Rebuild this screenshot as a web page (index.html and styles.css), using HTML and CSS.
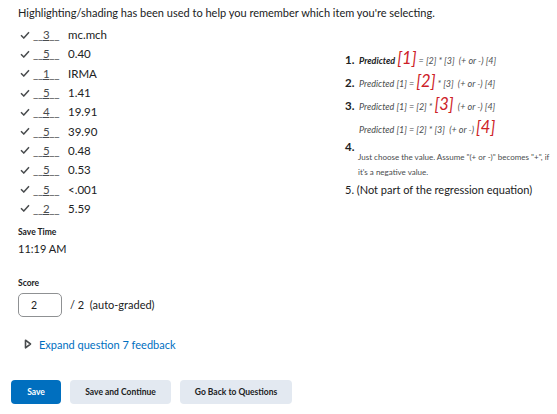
FILE: index.html
```html
<!DOCTYPE html>
<html lang="en">
<head>
  <meta charset="UTF-8">
  <title>Question 7</title>
  <link rel="stylesheet" href="styles.css">
</head>
<body>
  <p class="intro">Highlighting/shading has been used to help you remember which item you're selecting.</p>

  <div class="match">
    <ul class="answers">
      <li><svg class="check" width="10" height="8" viewBox="0 0 10 8"><path d="M1 4.2 L3.8 7 L9 1.2" fill="none" stroke="#494c4e" stroke-width="1.5"/></svg><span class="blank">__<u>3</u>__</span><span>mc.mch</span></li>
      <li><svg class="check" width="10" height="8" viewBox="0 0 10 8"><path d="M1 4.2 L3.8 7 L9 1.2" fill="none" stroke="#494c4e" stroke-width="1.5"/></svg><span class="blank">__<u>5</u>__</span><span>0.40</span></li>
      <li><svg class="check" width="10" height="8" viewBox="0 0 10 8"><path d="M1 4.2 L3.8 7 L9 1.2" fill="none" stroke="#494c4e" stroke-width="1.5"/></svg><span class="blank">__<u>1</u>__</span><span>IRMA</span></li>
      <li><svg class="check" width="10" height="8" viewBox="0 0 10 8"><path d="M1 4.2 L3.8 7 L9 1.2" fill="none" stroke="#494c4e" stroke-width="1.5"/></svg><span class="blank">__<u>5</u>__</span><span>1.41</span></li>
      <li><svg class="check" width="10" height="8" viewBox="0 0 10 8"><path d="M1 4.2 L3.8 7 L9 1.2" fill="none" stroke="#494c4e" stroke-width="1.5"/></svg><span class="blank">__<u>4</u>__</span><span>19.91</span></li>
      <li><svg class="check" width="10" height="8" viewBox="0 0 10 8"><path d="M1 4.2 L3.8 7 L9 1.2" fill="none" stroke="#494c4e" stroke-width="1.5"/></svg><span class="blank">__<u>5</u>__</span><span>39.90</span></li>
      <li><svg class="check" width="10" height="8" viewBox="0 0 10 8"><path d="M1 4.2 L3.8 7 L9 1.2" fill="none" stroke="#494c4e" stroke-width="1.5"/></svg><span class="blank">__<u>5</u>__</span><span>0.48</span></li>
      <li><svg class="check" width="10" height="8" viewBox="0 0 10 8"><path d="M1 4.2 L3.8 7 L9 1.2" fill="none" stroke="#494c4e" stroke-width="1.5"/></svg><span class="blank">__<u>5</u>__</span><span>0.53</span></li>
      <li><svg class="check" width="10" height="8" viewBox="0 0 10 8"><path d="M1 4.2 L3.8 7 L9 1.2" fill="none" stroke="#494c4e" stroke-width="1.5"/></svg><span class="blank">__<u>5</u>__</span><span>&lt;.001</span></li>
      <li><svg class="check" width="10" height="8" viewBox="0 0 10 8"><path d="M1 4.2 L3.8 7 L9 1.2" fill="none" stroke="#494c4e" stroke-width="1.5"/></svg><span class="blank">__<u>2</u>__</span><span>5.59</span></li>
    </ul>

    <ol class="choices">
      <li><span class="num">1.</span><span class="eq"><b>Predicted</b> <span class="hl">[1]</span> = [2] * [3] &nbsp;(+ or -) [4]</span></li>
      <li><span class="num">2.</span><span class="eq">Predicted [1] = <span class="hl">[2]</span> * [3] &nbsp;(+ or -) [4]</span></li>
      <li><span class="num">3.</span><span class="eq">Predicted [1] = [2] * <span class="hl">[3]</span> &nbsp;(+ or -) [4]</span></li>
      <li class="sub"><span class="eq">Predicted [1] = [2] * [3] &nbsp;(+ or -) <span class="hl">[4]</span></span></li>
      <li class="four"><span class="num">4.</span><span class="note">Just choose the value. Assume "(+ or -)" becomes "+", if it's a negative value.</span></li>
      <li class="five">5. (Not part of the regression equation)</li>
    </ol>
  </div>

  <div class="field">
    <div class="label">Save Time</div>
    <div class="time">11:19 AM</div>
  </div>

  <div class="field score-field">
    <div class="label">Score</div>
    <div class="score">
      <span class="box">2</span>
      <span>/ 2 &nbsp;(auto-graded)</span>
    </div>
  </div>

  <div class="expand">
    <svg width="8" height="10" viewBox="0 0 8 10"><path d="M1.5 1.2 L6.5 5 L1.5 8.8 Z" fill="none" stroke="#494c4e" stroke-width="1.6" stroke-linejoin="round"/></svg>
    <a href="#">Expand question 7 feedback</a>
  </div>

  <div class="actions">
    <button class="primary">Save</button>
    <button class="wide">Save and Continue</button>
    <button class="wider">Go Back to Questions</button>
  </div>
</body>
</html>
```

FILE: styles.css
```css
body {
  font-family: Lato, 'Liberation Sans', sans-serif;
  color: #202122;
  margin: 0;
  padding: 6px 0 0 18px;
  font-size: 11px;
}
.intro {
  margin: 0 0 6px;
  font-size: 11px;
}
.match {
  display: flex;
}
.answers {
  flex-shrink: 0;
  list-style: none;
  margin: 0;
  padding: 0 0 0 2px;
  width: 325px;
}
.answers li {
  display: flex;
  align-items: center;
  height: 19.3px;
  font-size: 11.5px;
}
.check {
  margin-right: 3px;
}
.blank {
  width: 35px;
  color: #494c4e;
  letter-spacing: -0.3px;
}
.choices {
  list-style: none;
  margin: 0;
  padding: 23px 0 0;
  font-size: 11px;
}
.choices li {
  display: flex;
  align-items: baseline;
  height: 20px;
  margin-bottom: 3px;
}
.num {
  font-weight: 700;
  font-size: 11.5px;
  width: 14px;
}
.eq {
  font-style: italic;
  font-size: 9px;
  color: #494c4e;
}
.eq b {
  font-weight: 700;
  color: #202122;
}
.hl {
  font-size: 16.5px;
  color: #cd2026;
}
.sub {
  padding-left: 14px;
}
.choices .four {
  display: block;
  height: auto;
  line-height: 13px;
  margin: 1px 0 0;
}
.note {
  display: block;
  font-size: 8px;
  line-height: 15px;
  margin-top: -3px;
  padding-left: 13px;
  color: #494c4e;
}
.choices .five {
  display: block;
  height: auto;
  line-height: 18px;
  margin-top: 1px;
}
.field {
  margin-top: 8px;
}
.label {
  font-size: 8.5px;
  font-weight: 700;
  line-height: 12px;
  margin-bottom: 3px;
}
.time {
  font-size: 11px;
  line-height: 16px;
}
.score-field {
  margin-top: 20px;
}
.score-field .label {
  margin-bottom: 4px;
}
.score {
  display: flex;
  align-items: center;
  gap: 8px;
}
.box {
  width: 30px;
  height: 22px;
  border: 1px solid #8f9193;
  border-radius: 5px;
  padding-left: 12px;
  line-height: 22px;
  font-size: 10.5px;
}
.expand {
  display: flex;
  align-items: center;
  gap: 7px;
  margin: 21px 0 0 6px;
}
.expand a {
  color: #006fbf;
  text-decoration: none;
  font-size: 11px;
}
.actions {
  display: flex;
  gap: 9px;
  margin: 29px 0 0 -7px;
}
button {
  font-family: Lato, 'Liberation Sans', sans-serif;
  font-size: 8.5px;
  font-weight: 700;
  height: 24px;
  padding: 0;
  border: none;
  border-radius: 4px;
  background: #e3e9f1;
  color: #202122;
}
button.primary {
  background: #006fbf;
  color: #fff;
  width: 50px;
}
button.wide {
  width: 101px;
}
button.wider {
  width: 112px;
}
```
